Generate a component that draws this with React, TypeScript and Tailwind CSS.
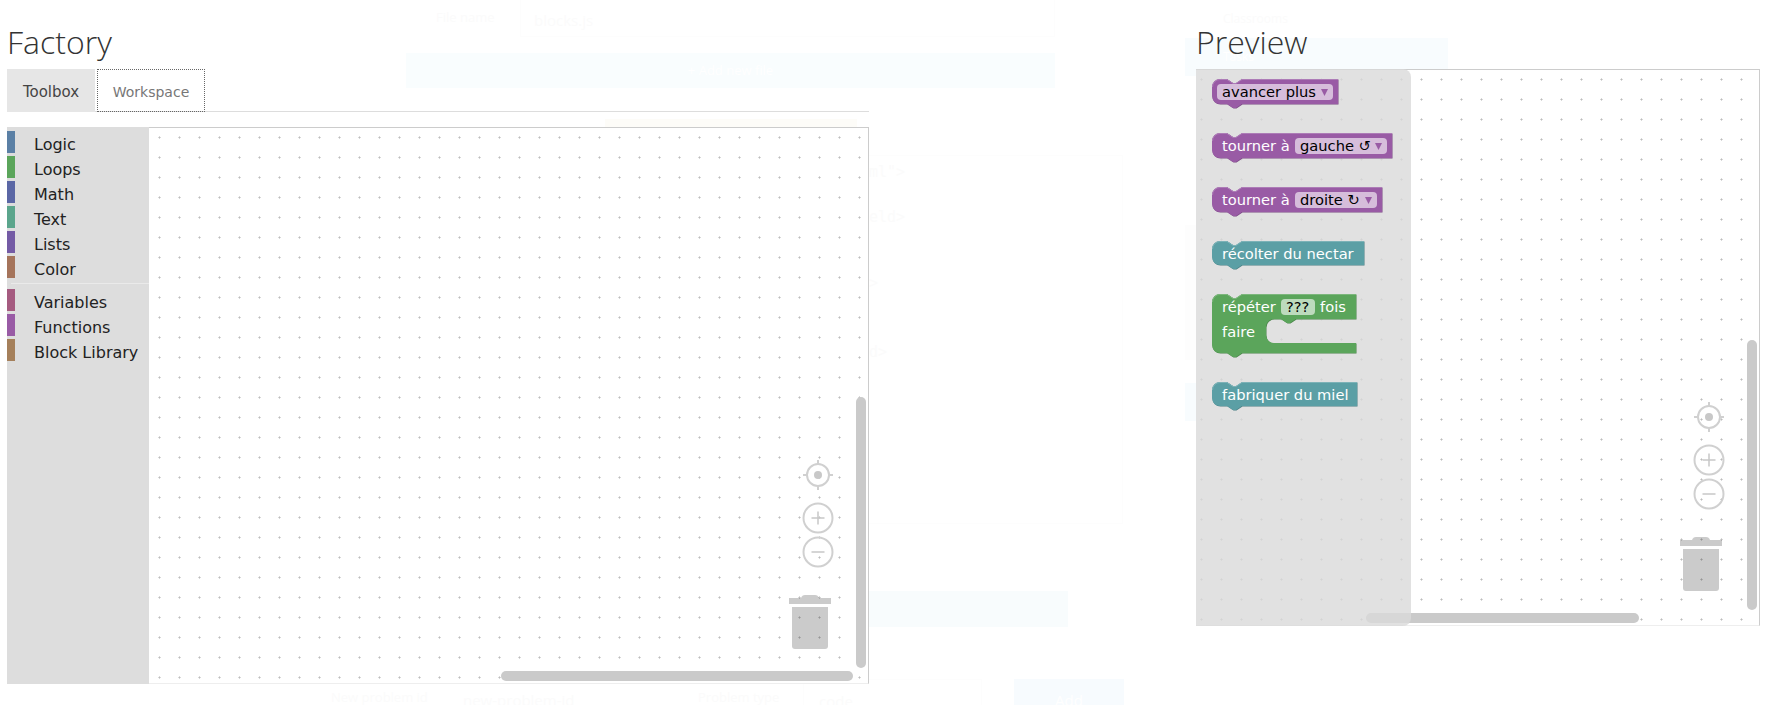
import React from 'react';

interface Category {
  name: string;
  color: string;
}

const topCategories: Category[] = [
  { name: 'Logic', color: 'bg-[#5b80a5]' },
  { name: 'Loops', color: 'bg-[#5ba55b]' },
  { name: 'Math', color: 'bg-[#5b67a5]' },
  { name: 'Text', color: 'bg-[#5ba58c]' },
  { name: 'Lists', color: 'bg-[#745ba5]' },
  { name: 'Color', color: 'bg-[#a5745b]' },
];

const bottomCategories: Category[] = [
  { name: 'Variables', color: 'bg-[#a55b80]' },
  { name: 'Functions', color: 'bg-[#995ba5]' },
  { name: 'Block Library', color: 'bg-[#a5805b]' },
];

const palette = {
  purple: { fill: '#995ba5', dark: '#7a4984', light: '#ad7cb7', field: '#d6bddb' },
  teal: { fill: '#5b9fa5', dark: '#497f84', light: '#7cb2b7', field: '#bddbde' },
  green: { fill: '#5ba55b', dark: '#498449', light: '#7cb77c', field: '#bddbbd' },
};

type Hue = keyof typeof palette;

const simplePath = (w: number, h: number) =>
  `M0,8 a8,8 0 0 1 8,-8 h7 l6,4 h3 l6,-4 H${w} V${h} H30 l-6,4 h-3 l-6,-4 H8 a8,8 0 0 1 -8,-8 z`;

// repeat block: top row, C-shaped input, bottom bar
const loopPath = (w: number) =>
  `M0,8 a8,8 0 0 1 8,-8 h7 l6,4 h3 l6,-4 H${w} V25 H84 l-6,4 h-3 l-6,-4 H62 a8,8 0 0 0 -8,8 V41 a8,8 0 0 0 8,8 H${w} V59 H30 l-6,4 h-3 l-6,-4 H8 a8,8 0 0 1 -8,-8 z`;

function BlockShape({ d, hue, w, h, children }: { d: string; hue: Hue; w: number; h: number; children: React.ReactNode }) {
  const c = palette[hue];
  return (
    <svg width={w + 2} height={h} className="block shrink-0 font-['DejaVu_Sans',sans-serif] text-[14.67px]">
      <path d={d} transform="translate(0.5,0.5)" fill={c.dark} />
      <path d={d} fill={c.fill} />
      <path d={`M0.5,8 a7.5,7.5 0 0 1 7.5,-7.5 h7 l6,4 h3 l6,-4 H${w}`} fill="none" stroke={c.light} strokeWidth="1" />
      {children}
    </svg>
  );
}

function Dropdown({ x, width, label, hue }: { x: number; width: number; label: string; hue: Hue }) {
  const c = palette[hue];
  const ax = x + width - 12;
  return (
    <>
      <rect x={x} y={5} width={width} height={16} rx={4} fill={c.field} />
      <text x={x + 5} y={18} fill="#000">{label}</text>
      <polygon points={`${ax},10 ${ax + 7},10 ${ax + 3.5},17`} fill={c.fill} />
    </>
  );
}

function Grid({ id, x, y }: { id: string; x: number; y: number }) {
  return (
    <svg className="absolute inset-0 h-full w-full">
      <defs>
        <pattern id={id} x={x} y={y} width="20" height="20" patternUnits="userSpaceOnUse">
          <rect x="0" y="1" width="3" height="1" fill="#d8d8d8" />
          <rect x="1" y="0" width="1" height="3" fill="#d8d8d8" />
          <rect x="1" y="1" width="1" height="1" fill="#bdbdbd" />
        </pattern>
      </defs>
      <rect width="100%" height="100%" fill={`url(#${id})`} />
    </svg>
  );
}

function Controls() {
  return (
    <svg width="60" height="200" className="absolute right-[20px] top-[329px]">
      <g fill="none" stroke="#d0d0d0" strokeWidth="2">
        <circle cx="30" cy="18" r="11" />
        <path d="M30,3 V7 M30,29 V33 M15,18 H19 M41,18 H45" />
        <circle cx="30" cy="61" r="14.5" />
        <circle cx="30" cy="95" r="14.5" />
      </g>
      <circle cx="30" cy="18" r="4" fill="#c8c8c8" />
      <path d="M23.5,61 H36.5 M30,54.5 V67.5 M23.5,95 H36.5" stroke="#c8c8c8" strokeWidth="1.5" />
      <g fill="#000" opacity="0.2">
        <path d="M13,141 q1,-3 4,-3 h10 q3,0 4,3 z" />
        <rect x="1" y="141" width="42" height="6" />
        <path d="M4,150 H40 V189 a3,3 0 0 1 -3,3 H7 a3,3 0 0 1 -3,-3 z" />
      </g>
    </svg>
  );
}

function ScrollBars({ vClass, hClass }: { vClass: string; hClass: string }) {
  return (
    <>
      <div className={`absolute right-[2px] w-[10px] rounded-[5px] bg-[#cacaca] ${vClass}`} />
      <div className={`absolute top-[543px] h-[10px] rounded-[5px] bg-[#cacaca] ${hClass}`} />
    </>
  );
}

function ToolboxRow({ name, color }: Category) {
  return (
    <div className="flex h-[22px] items-center">
      <span className={`h-full w-[8px] ${color}`} />
      <span className="ml-[19px] pt-[6px] text-[16px] leading-none text-[#222]">{name}</span>
    </div>
  );
}

function Toolbox() {
  return (
    <div className="absolute bottom-[-1px] left-0 top-[-1px] flex w-[142px] flex-col gap-[3px] bg-[#ddd] pt-[4px] font-['DejaVu_Sans',sans-serif]">
      {topCategories.map((c) => (
        <ToolboxRow key={c.name} {...c} />
      ))}
      <div className="mb-[2px] ml-[4px] mt-[2px] h-px bg-[#eaeaea]" />
      {bottomCategories.map((c) => (
        <ToolboxRow key={c.name} {...c} />
      ))}
    </div>
  );
}

function Flyout() {
  return (
    <div className="absolute bottom-[-1px] left-0 top-[-1px] flex w-[215px] flex-col gap-[24px] rounded-r-lg bg-[#d9d9d9]/80 pl-[16px] pt-[10px]">
      <BlockShape d={simplePath(126, 25)} hue="purple" w={126} h={30}>
        <Dropdown x={5} width={116} label="avancer plus" hue="purple" />
      </BlockShape>
      <BlockShape d={simplePath(180, 25)} hue="purple" w={180} h={30}>
        <text x={10} y={18} fill="#fff">tourner à</text>
        <Dropdown x={83} width={92} label="gauche ↺" hue="purple" />
      </BlockShape>
      <BlockShape d={simplePath(170, 25)} hue="purple" w={170} h={30}>
        <text x={10} y={18} fill="#fff">tourner à</text>
        <Dropdown x={83} width={82} label="droite ↻" hue="purple" />
      </BlockShape>
      <BlockShape d={simplePath(152, 24)} hue="teal" w={152} h={29}>
        <text x={10} y={18} fill="#fff">récolter du nectar</text>
      </BlockShape>
      <BlockShape d={loopPath(144)} hue="green" w={144} h={64}>
        <text x={10} y={18} fill="#fff">répéter</text>
        <rect x={69} y={5} width={34} height={16} rx={4} fill={palette.green.field} />
        <text x={74} y={18} fill="#000">???</text>
        <text x={108} y={18} fill="#fff">fois</text>
        <text x={10} y={43} fill="#fff">faire</text>
      </BlockShape>
      <BlockShape d={simplePath(145, 24)} hue="teal" w={145} h={29}>
        <text x={10} y={18} fill="#fff">fabriquer du miel</text>
      </BlockShape>
    </div>
  );
}

function Heading({ children }: { children: React.ReactNode }) {
  return (
    <div className="flex h-[69px] items-end">
      <h2 className="pb-[5px] font-['Open_Sans',sans-serif] text-[32px] font-light leading-[44px] text-[#333]">{children}</h2>
    </div>
  );
}

// the page underneath the modal, nearly faded out
function FadedPage() {
  return (
    <div className="absolute inset-0 flex font-['Open_Sans',sans-serif] text-[#fbfbfb]">
      <div className="ml-[331px] flex w-[793px] shrink-0 flex-col">
        <div className="ml-[105px] flex h-[37px] shrink-0">
          <span className="w-[84px] pt-[8px] text-[13px] leading-[18px]">File name</span>
          <div className="w-[535px] border border-t-0 border-[#fdfdfd] pl-[13px] pt-[9px] text-[15px] leading-[22px]">blocks.js</div>
        </div>
        <div className="ml-[75px] mt-[16px] flex h-[35px] w-[649px] shrink-0 items-center justify-center bg-[#f9fdfe] text-[13px] text-white">+ Add new file</div>
        <div className="ml-[274px] mt-[31px] h-[8px] w-[252px] shrink-0 bg-[#fdfcf8]" />
        <div className="ml-[529px] mt-[28px] h-[369px] w-[263px] shrink-0 border-b border-r border-t border-[#fdfdfd] pl-[9px] font-['DejaVu_Sans_Mono',monospace] text-[15px] leading-[22px]">
          <div className="pt-[5px]">ml"&gt;</div>
          <div className="pt-[23px]">eld&gt;</div>
          <div className="pt-[44px]">&gt;</div>
          <div className="pt-[47px]">d&gt;</div>
        </div>
        <div className="ml-[529px] mt-[67px] h-[36px] w-[208px] shrink-0 bg-[#f8fcfd]" />
        <div className="mt-[52px] flex h-[40px] shrink-0">
          <span className="w-[132px] pt-[9px] text-[13px] leading-[18px]">New problem id</span>
          <span className="w-[235px] pt-[10px] text-[15px] leading-[22px]">new-problem-id</span>
          <span className="w-[105px] pt-[9px] text-[13px] leading-[18px]">Problem type</span>
          <div className="w-[179px] border border-[#fdfdfd] pl-[15px] pt-[10px] text-[15px] leading-[22px]">code</div>
          <div className="ml-[32px] flex w-[110px] justify-center bg-[#f7fbfe] pt-[10px] text-[15px] leading-[22px] text-white">Add</div>
        </div>
      </div>
      <div className="ml-[61px] flex w-[263px] shrink-0 flex-col">
        <div className="flex h-[38px] items-center pl-[38px] text-[12px]">Classrooms</div>
        <div className="flex h-[38px] items-center bg-[#f8fcfe] pl-[38px] text-[12px] text-white">Tasks</div>
        <div className="mt-[149px] h-[135px] w-[11px] bg-[#fdfdfd]" />
        <div className="mt-[23px] h-[38px] w-[11px] bg-[#f8fcfe]" />
      </div>
    </div>
  );
}

export default function App() {
  return (
    <div className="relative h-[705px] w-[1782px] overflow-hidden bg-white">
      <FadedPage />
      <div className="relative flex pl-[7px]">
        <div className="w-[862px]">
          <Heading>Factory</Heading>
          <div className="flex h-[43px] border-b border-[#ddd] font-['DejaVu_Sans',sans-serif] text-[14px]">
            <div className="flex h-[43px] w-[88px] items-center justify-center bg-[#e6e6e6] pt-[3px] text-[15px] text-[#444]">Toolbox</div>
            <div className="ml-[3px] mt-px flex h-[41px] w-[106px] items-center justify-center bg-white pt-[3px] text-[#777] outline-1 outline-[#666] outline-dotted">Workspace</div>
          </div>
          <div className="relative mt-[15px] h-[557px] border-b border-r border-t border-b-[#eee] border-r-[#ccc] border-t-[#ccc] bg-white">
            <Grid id="factory-grid" x={11} y={8} />
            <Toolbox />
            <Controls />
            <ScrollBars vClass="top-[269px] h-[271px]" hClass="left-[494px] w-[352px]" />
          </div>
        </div>
        <div className="ml-[327px] w-[564px]">
          <Heading>Preview</Heading>
          <div className="relative h-[557px] border-b border-r border-t border-b-[#eee] border-r-[#ccc] border-t-[#ccc] bg-white">
            <Grid id="preview-grid" x={4} y={8} />
            <Controls />
            <ScrollBars vClass="top-[270px] h-[270px]" hClass="left-[170px] w-[273px]" />
            <Flyout />
          </div>
        </div>
      </div>
    </div>
  );
}
